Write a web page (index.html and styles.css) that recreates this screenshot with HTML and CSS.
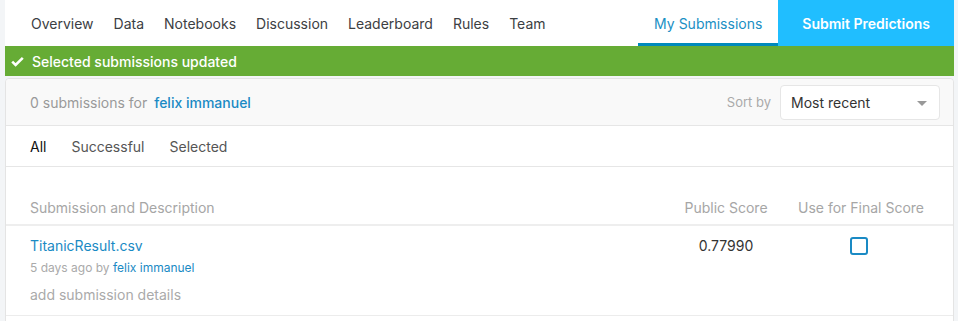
FILE: index.html
```html
<!DOCTYPE html>
<html>
	<head>
		<title>My Submissions</title>
		<link rel="stylesheet" href="styles.css">
	</head>
	<body>
		<div class="page">
			<nav class="topnav">
				<ul class="tabs">
					<li>Overview</li>
					<li>Data</li>
					<li>Notebooks</li>
					<li>Discussion</li>
					<li>Leaderboard</li>
					<li>Rules</li>
					<li>Team</li>
				</ul>
				<a class="tab-active">My Submissions</a>
				<a class="submit-btn">Submit Predictions</a>
			</nav>

			<div class="alert">
				<svg class="check" width="13" height="11" viewBox="0 0 13 11"><path d="M1.2 5.6 L4.6 9 L11.8 1.8" fill="none" stroke="#fff" stroke-width="2.6"/></svg>
				Selected submissions updated
			</div>

			<section class="card">
				<header class="card-head">
					<div class="count">0 submissions for <a class="link strong">felix immanuel</a></div>
					<div class="sort">
						<span class="sort-label">Sort by</span>
						<div class="select">Most recent <span class="caret"></span></div>
					</div>
				</header>

				<div class="filters">
					<span class="filter current">All</span>
					<span class="filter">Successful</span>
					<span class="filter">Selected</span>
				</div>

				<div class="row thead">
					<div>Submission and Description</div>
					<div class="center">Public Score</div>
					<div class="center">Use for Final Score</div>
				</div>

				<div class="row tbody">
					<div>
						<div class="link title">TitanicResult.csv</div>
						<div class="meta">5 days ago by <a class="link">felix immanuel</a></div>
						<div class="details">add submission details</div>
					</div>
					<div class="center score">0.77990</div>
					<div class="center"><span class="checkbox"></span></div>
				</div>
			</section>
		</div>
	</body>
</html>
```

FILE: styles.css
```css
body
{
	margin: 0;
	background: #f3f5f7;
	font-family: Inter, "Noto Sans", sans-serif;
	color: #3c4043;
}

.page
{
	margin: 0 4px 0 5px;
}

/* top tabs */
.topnav
{
	display: flex;
	align-items: stretch;
	height: 46px;
	background: #fff;
	font-size: 14px;
}

.tabs
{
	display: flex;
	gap: 20px;
	list-style: none;
	margin: 0;
	padding: 0 0 0 26px;
	flex: 1;
	align-items: center;
	color: #3c4043;
}

.tab-active
{
	display: flex;
	align-items: center;
	padding: 3px 16px 0;
	border-bottom: 3px solid #008abc;
	color: #1a8fc4;
}

.submit-btn
{
	display: flex;
	align-items: center;
	padding: 0 24px;
	white-space: nowrap;
	background: #20beff;
	color: #fff;
	font-weight: 600;
}

/* green notice */
.alert
{
	display: flex;
	align-items: center;
	gap: 8px;
	height: 30px;
	padding-left: 6px;
	background: #66ac35;
	color: #fff;
	font-size: 14px;
	font-weight: 500;
}

/* card */
.card
{
	margin-top: 2px;
	padding-bottom: 20px;
	background: #fff;
	border: 1px solid #e4e4e4;
	border-radius: 4px;
	font-size: 14px;
}

.card-head
{
	display: flex;
	align-items: center;
	justify-content: space-between;
	height: 46px;
	padding: 0 13px 0 24px;
	background: #f9f9f9;
	border-bottom: 1px solid #e6e6e6;
	border-radius: 4px 4px 0 0;
}

.count
{
	color: #999;
}

.link
{
	color: #1a8ac4;
}

.strong
{
	font-weight: 500;
	margin-left: 3px;
}

.sort
{
	display: flex;
	align-items: center;
	gap: 9px;
}

.sort-label
{
	font-size: 13px;
	color: #aaa;
}

.select
{
	position: relative;
	box-sizing: border-box;
	width: 160px;
	height: 35px;
	padding: 0 10px;
	line-height: 33px;
	background: #fff;
	border: 1px solid #e6e6e6;
	border-radius: 4px;
	color: #333;
}

.caret
{
	position: absolute;
	right: 12px;
	top: 15px;
	border-left: 5px solid transparent;
	border-right: 5px solid transparent;
	border-top: 5px solid #999;
}

.filters
{
	display: flex;
	gap: 25px;
	align-items: center;
	height: 40px;
	padding-left: 24px;
	border-bottom: 1px solid #e6e6e6;
	color: #555;
}

.filter.current
{
	color: #111;
}

/* table */
.row
{
	display: grid;
	grid-template-columns: 1fr 96px 140px;
	column-gap: 17px;
	padding: 0 22px 0 24px;
}

.center
{
	text-align: center;
}

.thead
{
	align-items: end;
	box-sizing: border-box;
	height: 59px;
	padding-bottom: 6px;
	line-height: 20px;
	color: #a6a6a6;
	border-bottom: 2px solid #eeeeee;
}

.tbody
{
	padding-top: 10px;
	padding-bottom: 10px;
	line-height: 20px;
	border-bottom: 1px solid #ececec;
}

.meta
{
	margin-top: 4px;
	font-size: 12px;
	line-height: 16px;
	color: #aaa;
}

.details
{
	margin-top: 9px;
	color: #aaa;
}

.score
{
	color: #333;
}

.checkbox
{
	display: inline-block;
	box-sizing: border-box;
	width: 18px;
	height: 18px;
	margin: 1px 5px 0 0;
	vertical-align: top;
	border: 2px solid #1a8ac4;
	border-radius: 3px;
}
```
